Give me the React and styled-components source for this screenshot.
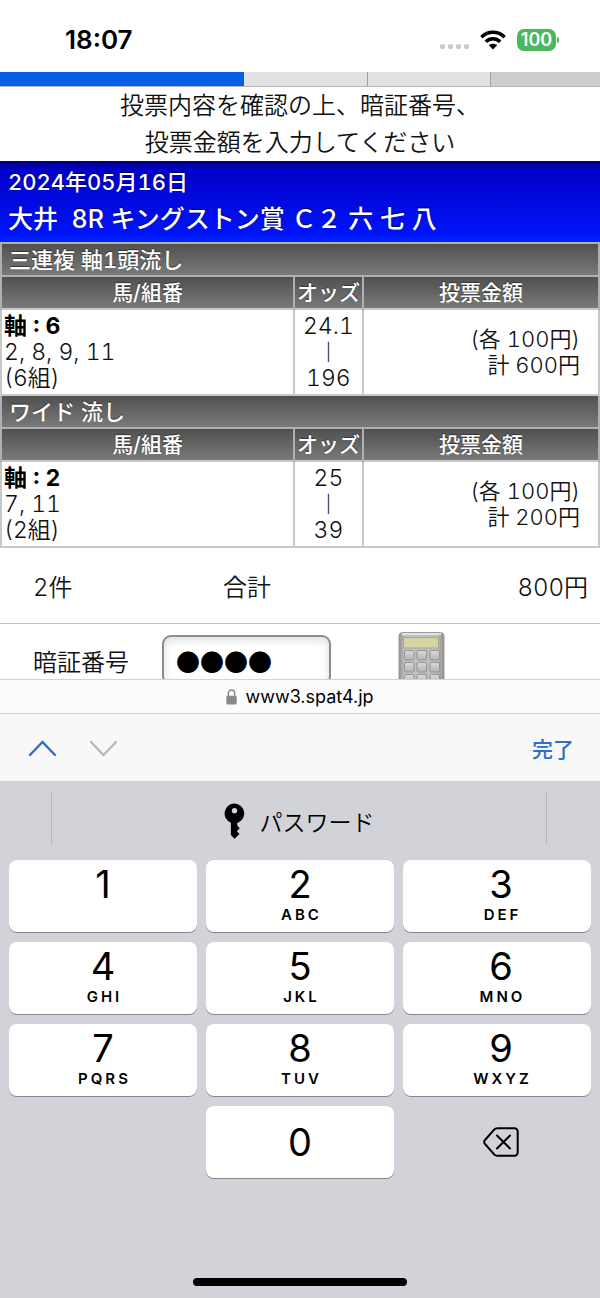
import { useState } from "react"
import styled, { createGlobalStyle } from "styled-components"

const GlobalStyle = createGlobalStyle`
    * {
        box-sizing: border-box;
    }
    body {
        margin: 0;
        background: #fff;
        color: #111;
        font-family: Inter, "Noto Sans CJK JP", sans-serif;
        font-variant-numeric: tabular-nums;
    }
    button, input {
        font: inherit;
        color: inherit;
    }
`

const Screen = styled.div`
    height: 100vh;
    display: flex;
    flex-direction: column;
    overflow: hidden;
`

/* status bar */

const StatusBar = styled.header`
    flex: none;
    height: 72px;
    padding: 16px 41px 8px 65px;
    display: flex;
    align-items: center;
    justify-content: space-between;
`

const Clock = styled.time`
    font-size: 26px;
    line-height: 32px;
    font-weight: 600;
    color: #000;
    font-variant-numeric: normal;
`

const StatusIcons = styled.div`
    display: flex;
    align-items: center;
    gap: 11px;
`

const SignalDots = styled.div`
    display: flex;
    gap: 3px;
    padding-top: 12px;
`

const Dot = styled.span`
    width: 5px;
    height: 5px;
    border-radius: 2px;
    background: #c8c8c8;
`

const Battery = styled.div`
    display: flex;
    align-items: center;
    gap: 1px;
    &::after {
        content: "";
        width: 2px;
        height: 6px;
        border-radius: 0 2px 2px 0;
        background: #49b85f;
    }
`

const BatteryLevel = styled.span`
    width: 39px;
    border-radius: 7px;
    background: #49b85f;
    color: #fff;
    font-size: 18px;
    line-height: 22px;
    font-weight: 600;
    text-align: center;
    font-variant-numeric: normal;
`

/* page */

const Page = styled.main`
    flex: 1;
    min-height: 0;
    overflow: hidden;
    font-weight: 350;
`

const Steps = styled.ol`
    margin: 0;
    padding: 0;
    list-style: none;
    display: flex;
    height: 15px;
    border-bottom: 1px solid #b4b4b4;
`

const Step = styled.li`
    flex: ${(props) => props.$size};
    background: ${(props) => props.$color};
    border-left: ${(props) => (props.$line ? "1px solid #a0a0a0" : "none")};
`

const Notice = styled.p`
    margin: 0;
    height: 74px;
    text-align: center;
    font-size: 24px;
    line-height: 37px;
`

const RaceHeader = styled.section`
    height: 81px;
    padding: 5px 8px 0;
    background: linear-gradient(#000078, #0000c8 10%, #0014fa 90%, #0028ff);
    color: #fff;
    text-shadow: 0 -1px 1px #000050;
`

const RaceDate = styled.div`
    font-size: 22px;
    line-height: 32px;
    font-weight: 500;
`

const RaceName = styled.h1`
    margin: 0;
    font-size: 25px;
    line-height: 42px;
    font-weight: 500;
    white-space: pre;
`

const BetTable = styled.table`
    width: 100%;
    table-layout: fixed;
    border-collapse: collapse;
    line-height: 26px;
`

const HeadCell = styled.th`
    height: 33px;
    padding: 0 ${(props) => (props.$title ? "7px" : "0")};
    border: 2px solid #b0b0b0;
    border-bottom-width: 1px;
    background: linear-gradient(#505050, #7a7a7a);
    color: #fff;
    font-size: ${(props) => (props.$title ? "22px" : "21px")};
    font-weight: 500;
    text-align: ${(props) => (props.$title ? "left" : "center")};
    text-shadow: 0 -1px 1px #333;
    white-space: nowrap;
`

const Cell = styled.td`
    height: 86px;
    border: 2px solid #c8c8c8;
    padding: ${(props) => (props.$align === "right" ? "0 18px 0 0" : "2px")};
    font-size: ${(props) => (props.$align === "right" ? "22px" : "23px")};
    text-align: ${(props) => props.$align || "left"};
`

const Axis = styled.strong`
    font-weight: 700;
    color: #000;
`

const RangeBar = styled.span`
    display: block;
    font-size: 17px;
`

const Total = styled.div`
    height: 76px;
    padding: 0 12px 0 33px;
    display: grid;
    grid-template-columns: 190px 1fr auto;
    align-items: center;
    border-bottom: 1px solid #c0c0c0;
    font-size: 24px;
`

const PinRow = styled.div`
    display: flex;
    padding-top: 8px;
    padding-left: 33px;
`

const PinLabel = styled.label`
    width: 129px;
    padding-top: 13px;
    font-size: 24px;
    line-height: 36px;
`

const PinInput = styled.input`
    width: 169px;
    height: 50px;
    margin: 3px 67px 0 0;
    padding: 0 12px;
    border: 2px solid #8c8c8c;
    border-radius: 9px;
    background: #fff;
    box-shadow: inset 0 3px 8px #ddd;
    color: #000;
    font-family: "Noto Sans CJK JP", sans-serif;
    font-size: 24px;
    line-height: 36px;
    outline: none;
`

const CalcButton = styled.button`
    padding: 0;
    border: none;
    background: none;
    line-height: 0;
`

/* browser bars */

const AddressBar = styled.div`
    flex: none;
    height: 35px;
    display: flex;
    align-items: center;
    justify-content: center;
    gap: 8px;
    border-top: 1px solid #d2d2d2;
    border-bottom: 1px solid #d2d2d2;
    background: #fdfcfd;
    color: #000;
    font-size: 18px;
    font-variant-numeric: normal;
`

const FormBar = styled.div`
    flex: none;
    height: 67px;
    padding: 0 26px 0 28px;
    display: flex;
    align-items: center;
    gap: 32px;
    background: #f8f8f9;
`

const BarButton = styled.button`
    padding: 0;
    border: none;
    background: none;
    display: flex;
    color: ${(props) => (props.disabled ? "#b9b9bb" : "#2a70c8")};
    font-size: 21px;
    font-weight: 500;
    &:last-child {
        margin-left: auto;
    }
`

/* keyboard */

const Keyboard = styled.section`
    flex: none;
    background: #d1d3d9;
    color: #000;
`

const Suggestions = styled.div`
    height: 79px;
    padding: 11px 53px 16px 51px;
    display: flex;
`

const Suggestion = styled.button`
    flex: 1;
    padding: 6px 0 0;
    border: none;
    border-left: 1px solid #b4b6bc;
    border-right: 1px solid #b4b6bc;
    background: none;
    display: flex;
    align-items: center;
    justify-content: center;
    gap: 15px;
    font-size: 23px;
    font-weight: 350;
`

const Keys = styled.div`
    padding: 0 9px;
    display: grid;
    grid-template-columns: repeat(3, 1fr);
    grid-auto-rows: 72px;
    gap: 10px 9px;
`

const Key = styled.button`
    padding: 0;
    border: none;
    border-radius: 8px;
    background: ${(props) => (props.$plain ? "none" : "#fff")};
    box-shadow: ${(props) => (props.$plain ? "none" : "0 1px 0 #86888c")};
    display: flex;
    flex-direction: column;
    align-items: center;
    justify-content: center;
    &:nth-child(3n) {
        padding-left: 8px;
    }
`

const Digit = styled.span`
    font-size: 38px;
    line-height: 34px;
    font-variant-numeric: normal;
`

const Letters = styled.span`
    height: 24px;
    padding-top: 2px;
    font-size: 15px;
    line-height: 24px;
    font-weight: 600;
    letter-spacing: 3px;
    margin-right: -3px;
`

const HomeArea = styled.div`
    height: 120px;
    display: flex;
    align-items: flex-end;
    justify-content: center;
    padding-bottom: 12px;
`

const HomeBar = styled.div`
    width: 214px;
    height: 8px;
    border-radius: 4px;
    background: #000;
`

const bets = [
    { title: "三連複 軸1頭流し", axis: "6", others: "2, 8, 9, 11", count: "(6組)", low: "24.1", high: "196", total: "600円" },
    { title: "ワイド 流し", axis: "2", others: "7, 11", count: "(2組)", low: "25", high: "39", total: "200円" },
]

const keys = [
    ["1", " "],
    ["2", "ABC"],
    ["3", "DEF"],
    ["4", "GHI"],
    ["5", "JKL"],
    ["6", "MNO"],
    ["7", "PQRS"],
    ["8", "TUV"],
    ["9", "WXYZ"],
]

const WifiIcon = () => (
    <svg width="26" height="20" viewBox="0 0 26 20">
        <g fill="none" stroke="#000" strokeWidth="3.6">
            <path d="M1.4 7.2C8 .6 18 .6 24.6 7.2" />
            <path d="M5.8 11.8c4.2-4 10.2-4 14.4 0" />
        </g>
        <path d="M13 19.5 8.9 15.3c2.3-2 5.9-2 8.2 0z" fill="#000" />
    </svg>
)

const CalculatorIcon = () => (
    <svg width="47" height="62" viewBox="0 0 47 62">
        <defs>
            <linearGradient id="body" x2="1">
                <stop offset="0" stopColor="#8f8f8f" />
                <stop offset=".12" stopColor="#c2c2c2" />
                <stop offset=".85" stopColor="#bdbdbd" />
                <stop offset="1" stopColor="#8f8f8f" />
            </linearGradient>
            <linearGradient id="pad" x2="0" y2="1">
                <stop offset="0" stopColor="#dcdcdc" />
                <stop offset="1" stopColor="#b2b2b2" />
            </linearGradient>
        </defs>
        <rect x="1" y=".5" width="45" height="61" rx="3.5" fill="url(#body)" stroke="#999" />
        <path d="M4 2h39" stroke="#e2e2e2" strokeWidth="2" />
        <rect x="5.5" y="5.5" width="35" height="10.5" fill="#d6d3a2" stroke="#a9a98e" />
        {[18.5, 30.5, 42.5].map((y) =>
            [6.5, 19, 32].map((x) => (
                <rect key={`${x}-${y}`} x={x} y={y} width="9.5" height="9.5" rx="1.5" fill="url(#pad)" stroke="#949494" />
            ))
        )}
    </svg>
)

const LockIcon = () => (
    <svg width="11" height="16" viewBox="0 0 11 16">
        <path d="M2.3 8V4.4a3.2 3.4 0 0 1 6.4 0V8" fill="none" stroke="#8a8a8d" strokeWidth="1.5" />
        <rect x=".3" y="6.8" width="10.4" height="8.7" rx="1.5" fill="#8a8a8d" />
    </svg>
)

const Chevron = ({ d }) => (
    <svg width="29" height="18" viewBox="0 0 29 18" fill="none" stroke="currentColor" strokeWidth="2.4" strokeLinecap="round">
        <path d={d} />
    </svg>
)

const KeyIcon = () => (
    <svg width="21" height="36" viewBox="0 0 21 36">
        <path
            fillRule="evenodd"
            d="M10.5.5a10 10 0 0 0-3.600 19.300V32l3.600 3.700 5-4.600-2.700-2.900 2.900-2.900-2.400-2.800V20A10 10 0 0 0 10.500.5zm0 4.500a2.700 2.700 0 1 1 0 5.400 2.700 2.700 0 0 1 0-5.400z"
        />
    </svg>
)

const DeleteIcon = () => (
    <svg width="36" height="30" viewBox="0 0 36 30" fill="none" stroke="#000" strokeWidth="2" strokeLinecap="round" strokeLinejoin="round">
        <path d="M14.200 1.200H31.500a3.200 3.200 0 0 1 3.200 3.200v21.200a3.200 3.200 0 0 1-3.200 3.200H14.200a4 4 0 0 1-2.800-1.200L2 17a2.800 2.800 0 0 1 0-4l9.400-10.600a4 4 0 0 1 2.800-1.200z" />
        <path d="m14 8.500 13 13M27 8.500l-13 13" />
    </svg>
)

const Bet = ({ bet }) => (
    <>
        <tr>
            <HeadCell $title colSpan={3}>{bet.title}</HeadCell>
        </tr>
        <tr>
            <HeadCell>馬/組番</HeadCell>
            <HeadCell>オッズ</HeadCell>
            <HeadCell>投票金額</HeadCell>
        </tr>
        <tr>
            <Cell>
                <Axis>軸 : {bet.axis}</Axis><br />
                {bet.others}<br />
                {bet.count}
            </Cell>
            <Cell $align="center">
                {bet.low}
                <RangeBar>|</RangeBar>
                {bet.high}
            </Cell>
            <Cell $align="right">
                (各 100円)<br />
                計 {bet.total}
            </Cell>
        </tr>
    </>
)

const App = () => {
    const [pin, setPin] = useState("●●●●")

    const press = () => setPin((value) => value + "●")
    const erase = () => setPin((value) => value.slice(0, -1))

    return (
        <Screen>
            <GlobalStyle />
            <StatusBar>
                <Clock>18:07</Clock>
                <StatusIcons>
                    <SignalDots><Dot /><Dot /><Dot /><Dot /></SignalDots>
                    <WifiIcon />
                    <Battery><BatteryLevel>100</BatteryLevel></Battery>
                </StatusIcons>
            </StatusBar>
            <Page>
                <Steps>
                    <Step $size={245} $color="#0560e6" />
                    <Step $size={123} $color="#e2e2e2" />
                    <Step $size={123} $color="#e2e2e2" $line />
                    <Step $size={109} $color="#cdcdcd" $line />
                </Steps>
                <Notice>
                    投票内容を確認の上、暗証番号、<br />
                    投票金額を入力してください
                </Notice>
                <RaceHeader>
                    <RaceDate>2024年05月16日</RaceDate>
                    <RaceName>大井  8R キングストン賞 Ｃ２ 六 七 八</RaceName>
                </RaceHeader>
                <BetTable>
                    <colgroup>
                        <col width="49%" />
                        <col width="11.5%" />
                        <col />
                    </colgroup>
                    <tbody>
                        {bets.map((bet) => <Bet key={bet.title} bet={bet} />)}
                    </tbody>
                </BetTable>
                <Total>
                    <span>2件</span>
                    <span>合計</span>
                    <span>800円</span>
                </Total>
                <PinRow>
                    <PinLabel htmlFor="pin">暗証番号</PinLabel>
                    <PinInput id="pin" inputMode="numeric" value={pin} onChange={(e) => setPin(e.target.value)} />
                    <CalcButton aria-label="電卓"><CalculatorIcon /></CalcButton>
                </PinRow>
            </Page>
            <AddressBar>
                <LockIcon />
                www3.spat4.jp
            </AddressBar>
            <FormBar>
                <BarButton aria-label="前へ"><Chevron d="M2 16 14.5 3 27 16" /></BarButton>
                <BarButton aria-label="次へ" disabled><Chevron d="M2 3l12.5 13L27 3" /></BarButton>
                <BarButton>完了</BarButton>
            </FormBar>
            <Keyboard>
                <Suggestions>
                    <Suggestion><KeyIcon />パスワード</Suggestion>
                </Suggestions>
                <Keys>
                    {keys.map(([digit, letters]) => (
                        <Key key={digit} onClick={press}>
                            <Digit>{digit}</Digit>
                            <Letters>{letters}</Letters>
                        </Key>
                    ))}
                    <span />
                    <Key onClick={press}><Digit>0</Digit></Key>
                    <Key $plain aria-label="削除" onClick={erase}><DeleteIcon /></Key>
                </Keys>
                <HomeArea><HomeBar /></HomeArea>
            </Keyboard>
        </Screen>
    )
}

export default App
